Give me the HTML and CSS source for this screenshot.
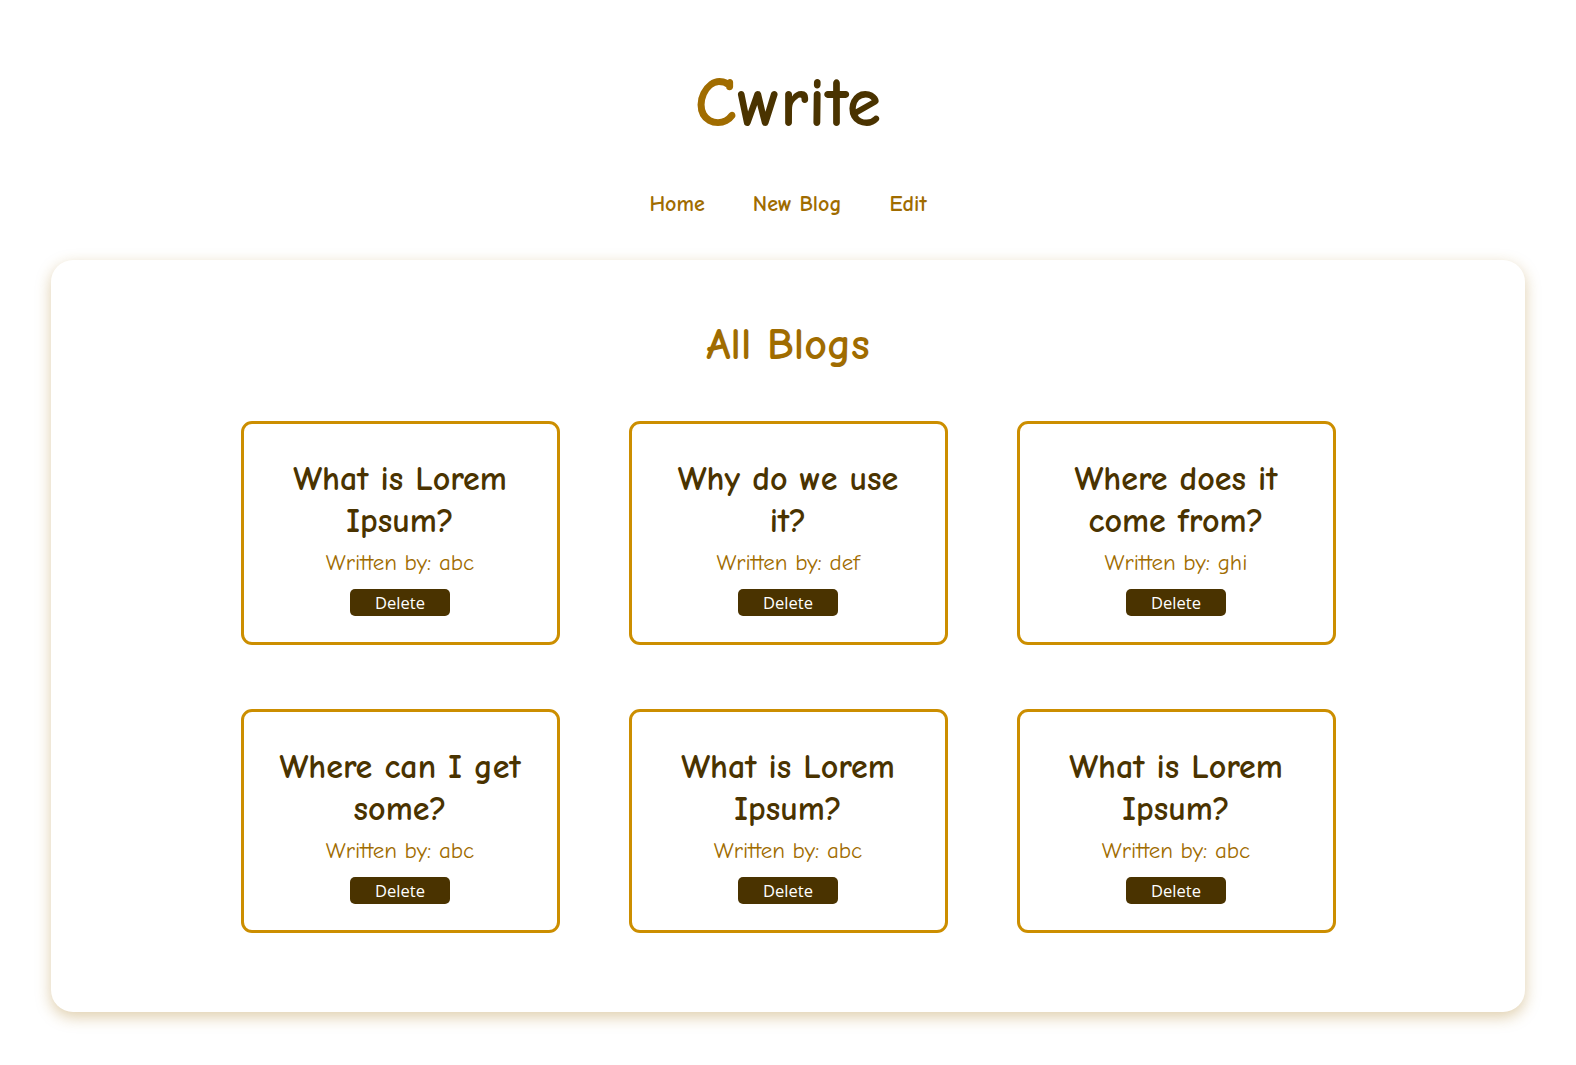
FILE: index.html
```html
<!DOCTYPE html>
<html lang="en">
<head>
<meta charset="utf-8">
<title>Cwrite</title>
<link rel="stylesheet" href="styles.css">
</head>
<body>
<header class="header">
  <h1 class="logo"><span class="logo-c">C</span>write</h1>
  <nav class="nav">
    <a class="nav-link" href="#">Home</a>
    <a class="nav-link" href="#">New Blog</a>
    <a class="nav-link" href="#">Edit</a>
  </nav>
</header>
<main class="content">
  <h2 class="page-title">All Blogs</h2>
  <div class="blog-grid">
    <div class="blog-card">
      <h3 class="blog-title">What is Lorem Ipsum?</h3>
      <p class="blog-author">Written by: abc</p>
      <button class="delete-btn">Delete</button>
    </div>
    <div class="blog-card">
      <h3 class="blog-title">Why do we use it?</h3>
      <p class="blog-author">Written by: def</p>
      <button class="delete-btn">Delete</button>
    </div>
    <div class="blog-card">
      <h3 class="blog-title">Where does it come from?</h3>
      <p class="blog-author">Written by: ghi</p>
      <button class="delete-btn">Delete</button>
    </div>
    <div class="blog-card">
      <h3 class="blog-title">Where can I get some?</h3>
      <p class="blog-author">Written by: abc</p>
      <button class="delete-btn">Delete</button>
    </div>
    <div class="blog-card">
      <h3 class="blog-title">What is Lorem Ipsum?</h3>
      <p class="blog-author">Written by: abc</p>
      <button class="delete-btn">Delete</button>
    </div>
    <div class="blog-card">
      <h3 class="blog-title">What is Lorem Ipsum?</h3>
      <p class="blog-author">Written by: abc</p>
      <button class="delete-btn">Delete</button>
    </div>
  </div>
</main>
</body>
</html>
```
FILE: styles.css
```css
* {
  box-sizing: border-box;
}

body {
  margin: 0;
  background: #ffffff;
  font-family: "Comic Sans MS", "Comic Neue", "Open Sans", sans-serif;
  color: #4a3300;
}

.header {
  padding-top: 64px;
  text-align: center;
}

.logo {
  margin: 0;
  font-size: 70px;
  line-height: 80px;
  font-weight: 700;
  color: #4a3300;
}

.logo-c {
  color: #a06c00;
}

.nav {
  margin-top: 45px;
  display: flex;
  justify-content: center;
  gap: 48px;
  line-height: 30px;
}

.nav-link {
  color: #a06c00;
  font-size: 22px;
  font-weight: 700;
  text-decoration: none;
}

.content {
  margin: 41px 51px 50px;
  padding: 57px 0 79px;
  background: #ffffff;
  border-radius: 22px;
  box-shadow: 0 5px 15px rgba(165, 120, 25, 0.36);
}

.page-title {
  margin: 0;
  text-align: center;
  font-size: 44px;
  line-height: 56px;
  font-weight: 700;
  color: #a06c00;
}

.blog-grid {
  margin-top: 48px;
  display: grid;
  grid-template-columns: repeat(3, 319px);
  column-gap: 69px;
  row-gap: 64px;
  justify-content: center;
}

.blog-card {
  height: 224px;
  border: 3px solid #cc8e00;
  border-radius: 11px;
  padding: 34px 29px 0;
  display: flex;
  flex-direction: column;
  align-items: center;
  text-align: center;
}

.blog-title {
  margin: 0;
  font-size: 34px;
  line-height: 42px;
  font-weight: 700;
  color: #4a3300;
}

.blog-author {
  margin: 0;
  font-size: 23px;
  line-height: 42px;
  color: #a06c00;
}

.delete-btn {
  margin-top: 5px;
  width: 100px;
  height: 27px;
  border: none;
  border-radius: 5px;
  background: #4a3300;
  color: #ffffff;
  font-family: "Open Sans", sans-serif;
  font-size: 16.5px;
  line-height: 27px;
  padding: 0;
}
```
